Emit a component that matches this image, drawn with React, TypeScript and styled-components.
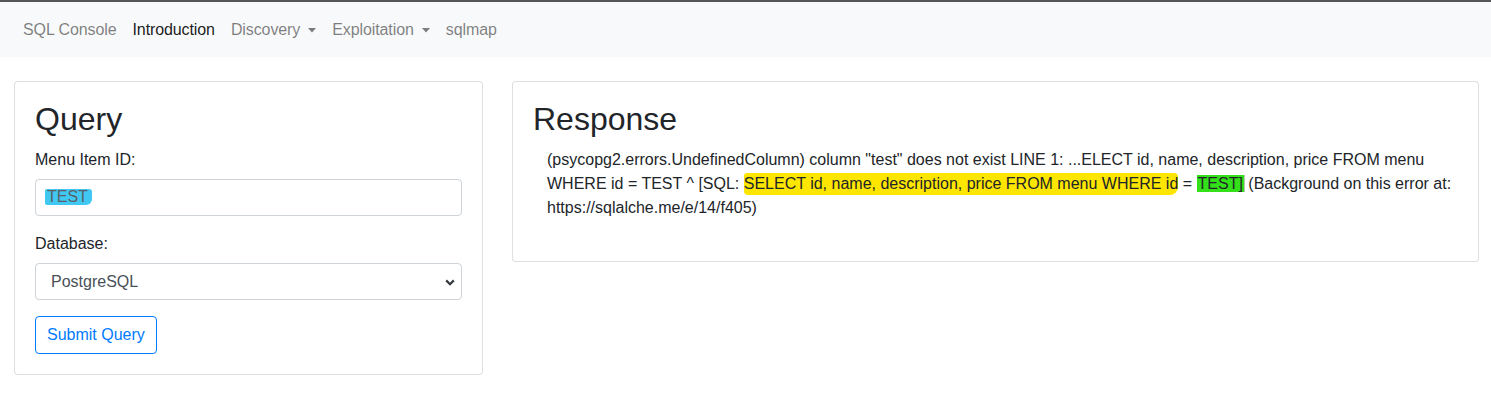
import styled, { createGlobalStyle } from 'styled-components';

const GlobalStyle = createGlobalStyle`
  * {
    box-sizing: border-box;
  }

  body {
    margin: 0;
    background: #fff;
    color: #212529;
    font-family: "Liberation Sans", Arial, sans-serif;
    font-size: 16px;
    line-height: 1.5;
  }
`;

const Caret = () => (
  <CaretIcon width="8" height="5" viewBox="0 0 8 5">
    <path d="M0 0h8L4 4.5z" fill="currentColor" />
  </CaretIcon>
);

const Chevron = () => (
  <ChevronIcon width="10" height="7" viewBox="0 0 10 7">
    <path d="M1.2 1.4L5 5.2l3.8-3.8" fill="none" stroke="#343a40" strokeWidth="2.2" />
  </ChevronIcon>
);

const App = () => (
  <>
    <GlobalStyle />
    <Navbar>
      <NavLink>SQL Console</NavLink>
      <NavLink active>Introduction</NavLink>
      <NavLink>
        Discovery <Caret />
      </NavLink>
      <NavLink>
        Exploitation <Caret />
      </NavLink>
      <NavLink>sqlmap</NavLink>
    </Navbar>
    <Main>
      <QueryCol>
        <Card>
          <CardTitle>Query</CardTitle>
          <FormGroup>
            <Label>Menu Item ID:</Label>
            <TextField>
              <CyanMark>TEST</CyanMark>
            </TextField>
          </FormGroup>
          <FormGroup>
            <Label>Database:</Label>
            <SelectBox>
              PostgreSQL
              <Chevron />
            </SelectBox>
          </FormGroup>
          <SubmitBtn type="button">Submit Query</SubmitBtn>
        </Card>
      </QueryCol>
      <ResponseCol>
        <Card>
          <CardTitle>Response</CardTitle>
          <ResponseText>
            (psycopg2.errors.UndefinedColumn) column "test" does not exist LINE 1: ...ELECT id, name,
            description, price FROM menu WHERE id = TEST ^ [SQL:{' '}
            <YellowMark>SELECT id, name, description, price FROM menu WHERE id</YellowMark> ={' '}
            <GreenMark>TEST]</GreenMark> (Background on this error at: https://sqlalche.me/e/14/f405)
          </ResponseText>
        </Card>
      </ResponseCol>
    </Main>
  </>
);

export default App;

const Navbar = styled.nav`
  display: flex;
  align-items: center;

  height: 57px;
  padding: 0 15px;

  border-top: 2px solid #55565a;
  background-color: #f8f9fa;
`;

const NavLink = styled.a<{ active?: boolean }>`
  display: flex;
  align-items: center;
  gap: 8px;

  padding: 8px;
  color: ${({ active }) => (active ? 'rgba(0, 0, 0, 0.9)' : 'rgba(0, 0, 0, 0.5)')};
  font-size: 16px;
  letter-spacing: -0.1px;

  cursor: pointer;
`;

const CaretIcon = styled.svg`
  margin-top: 2px;
`;

const Main = styled.main`
  display: flex;
  align-items: flex-start;
  gap: 29px;

  padding: 24px 12px 0 14px;
`;

const QueryCol = styled.div`
  flex: 0 0 469px;
`;

const ResponseCol = styled.div`
  flex: 1;
`;

const Card = styled.section`
  padding: 20px;

  border: 1px solid rgba(0, 0, 0, 0.125);
  border-radius: 4px;
  background-color: #fff;
`;

const CardTitle = styled.h2`
  margin: 0 0 11px;

  font-size: 32px;
  font-weight: 500;
  line-height: 35px;
`;

const FormGroup = styled.div`
  margin-bottom: 16px;
`;

const Label = styled.div`
  margin-bottom: 8px;
  line-height: 23px;
`;

const TextField = styled.div`
  display: flex;
  align-items: center;

  height: 37px;
  padding: 0 12px;

  border: 1px solid #ced4da;
  border-radius: 4px;
  color: #5a6066;
`;

const CyanMark = styled.span`
  margin: -2px 0 0 -3px;
  padding: 0 4px 0 2px;

  background-color: #40c8f2;
  border-radius: 2px 3px 6px 2px;
  line-height: 16px;
`;

const SelectBox = styled.div`
  display: flex;
  align-items: center;
  justify-content: space-between;

  height: 37px;
  padding: 0 6px 0 15px;

  border: 1px solid #ced4da;
  border-radius: 4px;
  color: #495057;
`;

const ChevronIcon = styled.svg`
  margin-top: 1px;
`;

const SubmitBtn = styled.button`
  height: 38px;
  padding: 0 11px;

  border: 1px solid #007bff;
  border-radius: 4px;
  background-color: transparent;
  color: #007bff;
  font-family: inherit;
  font-size: 16px;

  cursor: pointer;
`;

const ResponseText = styled.p`
  margin: 0 2px 21px 14px;
`;

const YellowMark = styled.span`
  padding: 2px 0 3px;

  background-color: #ffe600;
  border-radius: 3px 4px 8px 4px;
`;

const GreenMark = styled.span`
  padding: 0 1px;

  background-color: #33e019;
  box-shadow: 1px 0 0 #b9c6b4;
`;
